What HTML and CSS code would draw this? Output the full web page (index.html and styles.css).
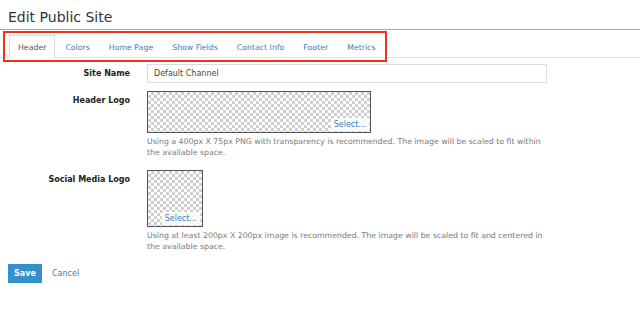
FILE: index.html
```html
<!DOCTYPE html>
<html lang="en">
<head>
  <meta charset="UTF-8">
  <meta name="viewport" content="width=device-width, initial-scale=1.0">
  <title>Edit Public Site</title>
  <link rel="stylesheet" href="styles.css">
</head>
<body>
  <h1 class="page-title">Edit Public Site</h1>

  <nav class="tabs">
    <a class="tab active">Header</a>
    <a class="tab">Colors</a>
    <a class="tab">Home Page</a>
    <a class="tab">Show Fields</a>
    <a class="tab">Contact Info</a>
    <a class="tab">Footer</a>
    <a class="tab">Metrics</a>
    <div class="tabs-highlight"></div>
  </nav>

  <form class="site-form">
    <div class="field field-name">
      <label class="field-label">Site Name</label>
      <div class="field-control">
        <input class="text-input" type="text" value="Default Channel">
      </div>
    </div>

    <div class="field">
      <label class="field-label">Header Logo</label>
      <div class="field-control">
        <div class="image-drop header-logo">
          <span class="select-btn">Select...</span>
        </div>
        <p class="help">Using a 400px X 75px PNG with transparency is recommended. The image will be scaled to fit within the available space.</p>
      </div>
    </div>

    <div class="field">
      <label class="field-label">Social Media Logo</label>
      <div class="field-control">
        <div class="image-drop social-logo">
          <span class="select-btn">Select...</span>
        </div>
        <p class="help">Using at least 200px X 200px image is recommended. The image will be scaled to fit and centered in the available space.</p>
      </div>
    </div>

    <div class="actions">
      <button class="btn-save" type="button">Save</button>
      <a class="link-cancel">Cancel</a>
    </div>
  </form>
</body>
</html>
```

FILE: styles.css
```css
body {
  font-family: "DejaVu Sans", Verdana, sans-serif;
  margin: 0;
  padding: 0;
  background-color: #fff;
  color: #333;
  font-size: 8px;
}

.page-title {
  margin: 0;
  padding: 9px 8px 0;
  height: 20px;
  font-size: 14px;
  font-weight: normal;
  color: #333;
  border-bottom: 1px solid #a9a9a9;
}

.tabs {
  position: relative;
  display: flex;
  margin-top: 5px;
  padding-left: 9px;
  border-bottom: 1px solid #e2e2e2;
}

.tab {
  display: block;
  height: 22px;
  line-height: 23px;
  padding: 0 8px;
  margin-right: 1px;
  margin-bottom: -1px;
  font-size: 7.8px;
  color: #3a7dbd;
  border: 1px solid transparent;
  border-bottom: none;
}

.tab.active {
  color: #555;
  background-color: #fff;
  border-color: #dcdcdc;
}

.tabs-highlight {
  position: absolute;
  left: 3px;
  top: -4px;
  width: 380px;
  height: 27px;
  border: 2px solid #f0311c;
  pointer-events: none;
}

.site-form {
  margin-top: 6px;
}

.field {
  display: flex;
  gap: 17px;
  margin-bottom: 12px;
}

.field-name {
  margin-bottom: 8px;
}

.field-label {
  width: 130px;
  flex-shrink: 0;
  text-align: right;
  font-weight: bold;
  color: #222;
  padding-top: 5px;
}

.field-control {
  width: 400px;
}

.text-input {
  display: block;
  box-sizing: border-box;
  width: 400px;
  height: 19px;
  padding: 0 6px;
  border: 1px solid #dcdcdc;
  font-family: inherit;
  font-size: 8px;
  color: #444;
}

.image-drop {
  position: relative;
  box-sizing: border-box;
  border: 1px solid #555;
  background: repeating-conic-gradient(#cfcfcf 0 25%, #fff 0 50%) 0 0 / 6px 6px;
}

.header-logo {
  width: 224px;
  height: 42px;
}

.social-logo {
  width: 56px;
  height: 57px;
}

.select-btn {
  position: absolute;
  right: 1px;
  bottom: 1px;
  padding: 1px 3px;
  line-height: 11px;
  background-color: rgba(255, 255, 255, 0.85);
  color: #3a7dbd;
}

.social-logo .select-btn {
  right: 2px;
}

.help {
  margin: 3px 0 0;
  font-size: 7.8px;
  line-height: 11px;
  color: #7a7a7a;
}

.actions {
  display: flex;
  align-items: center;
  gap: 10px;
  margin-top: 9px;
  padding-left: 8px;
}

.btn-save {
  width: 34px;
  height: 19px;
  padding: 0;
  border: none;
  background-color: #3591cb;
  color: #fff;
  font-family: inherit;
  font-size: 8px;
  font-weight: bold;
}

.link-cancel {
  color: #3a7dbd;
}
```
